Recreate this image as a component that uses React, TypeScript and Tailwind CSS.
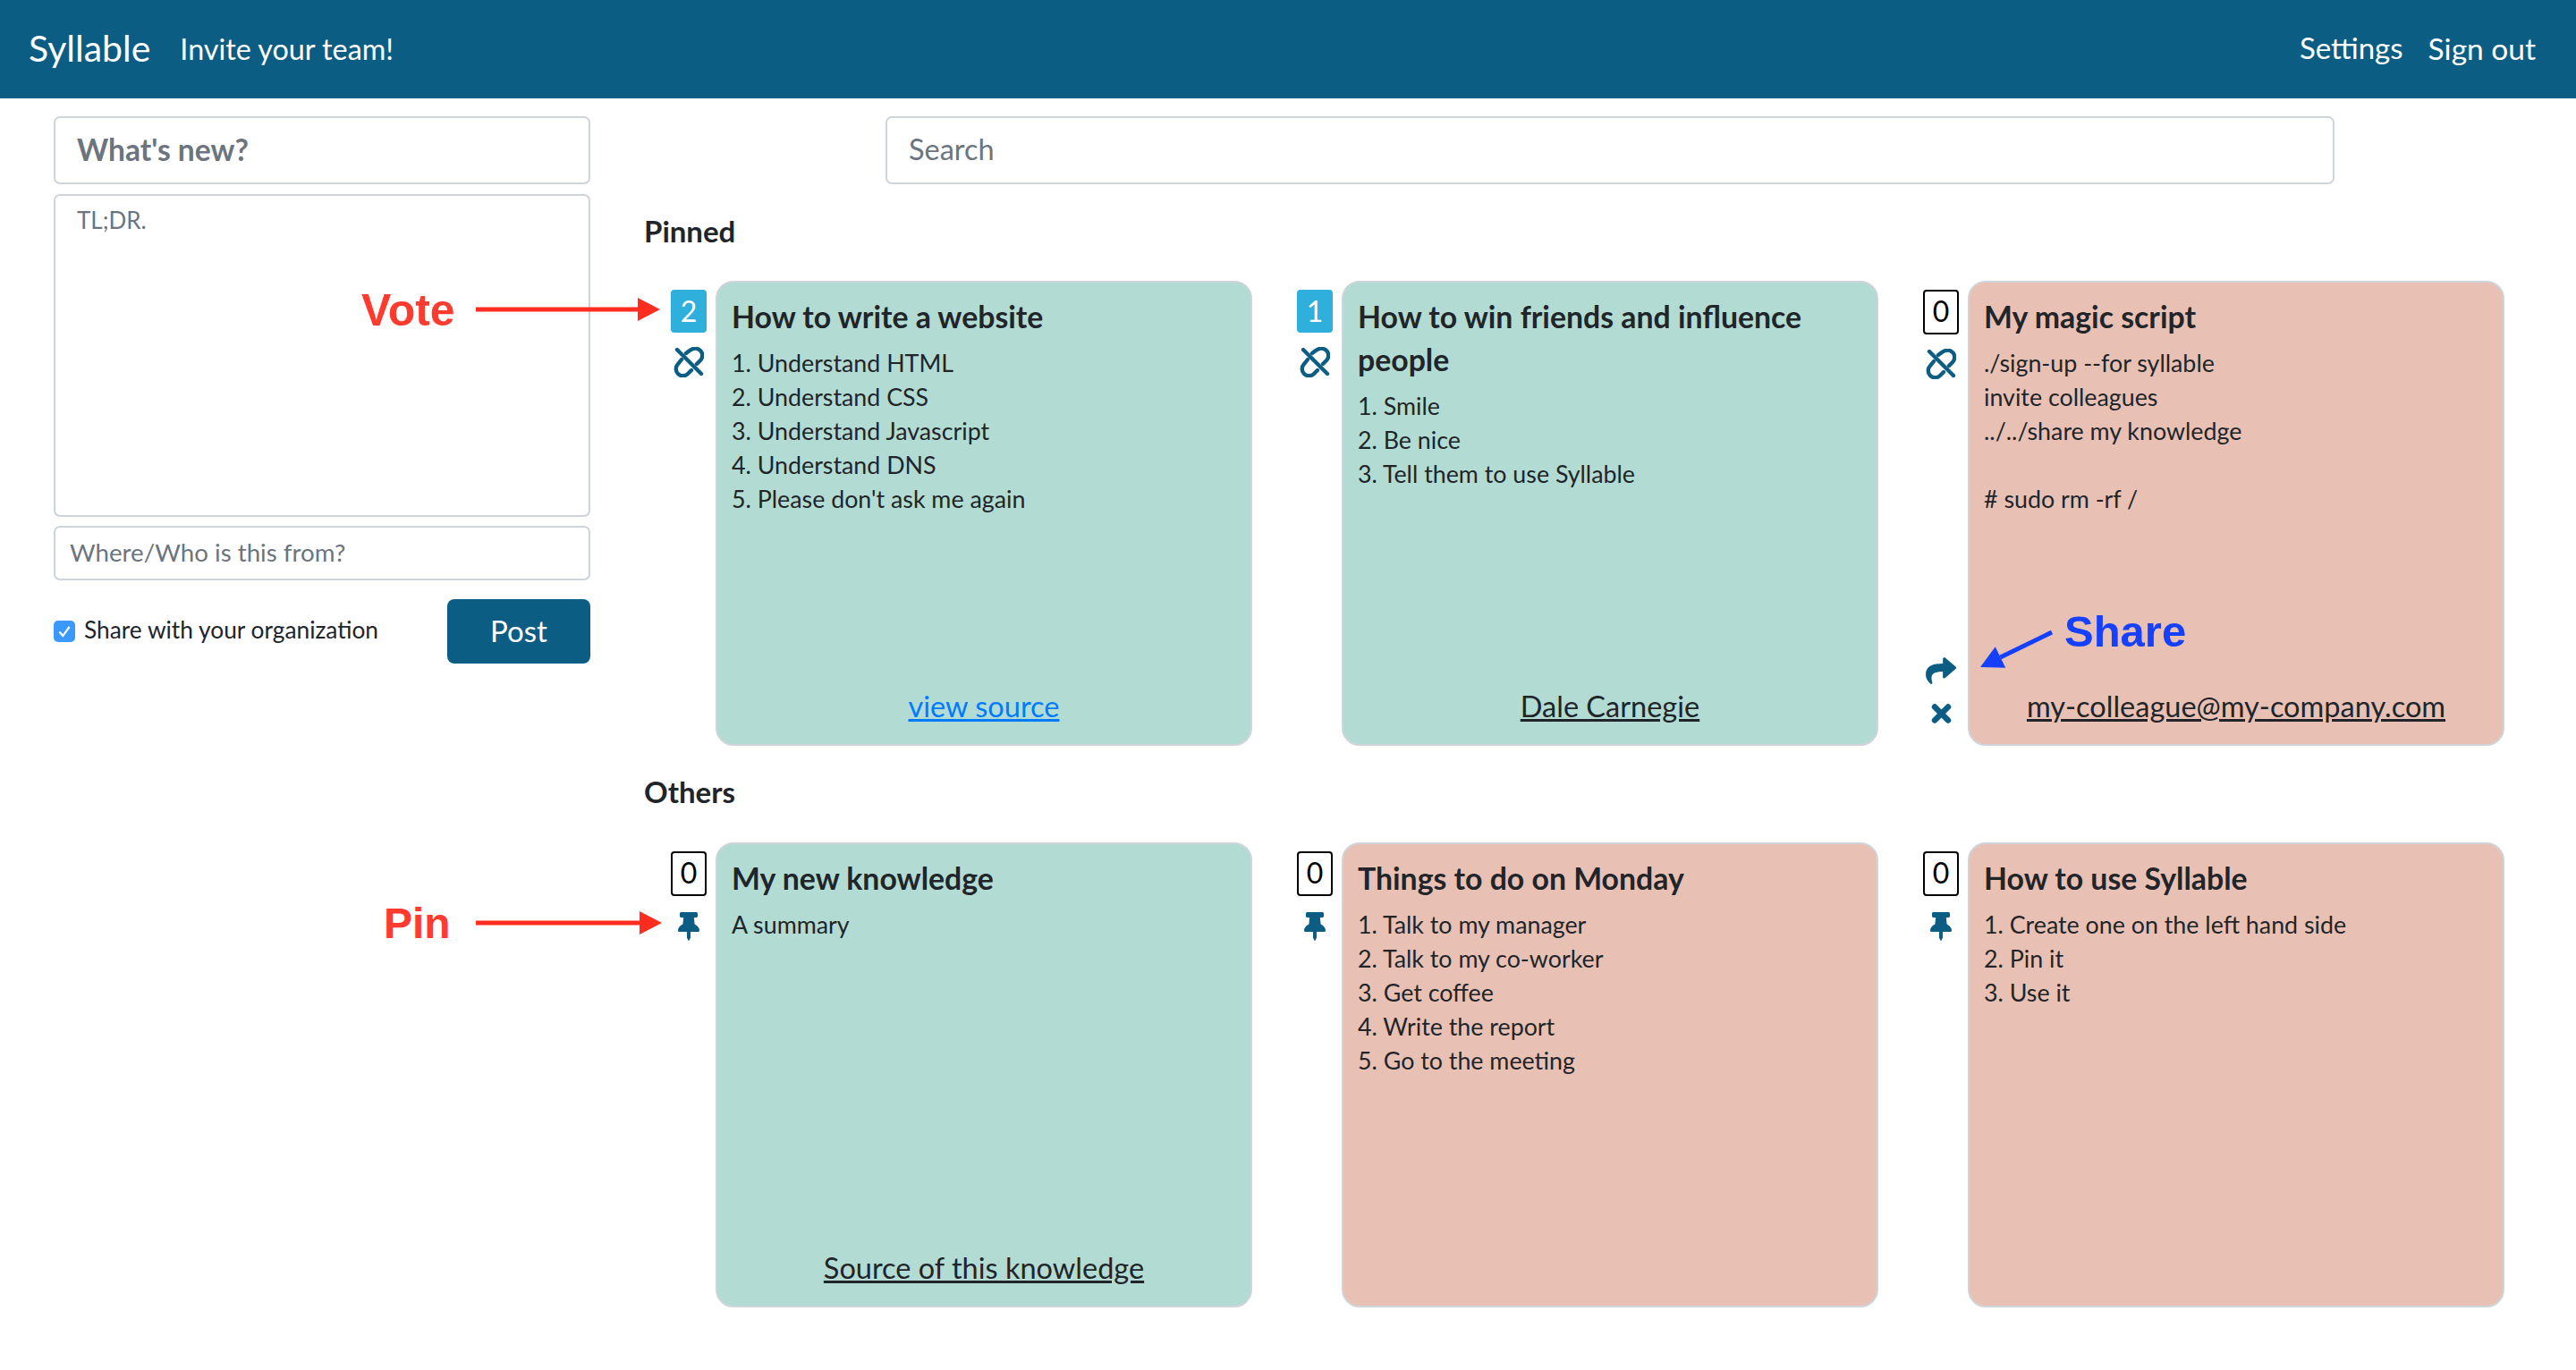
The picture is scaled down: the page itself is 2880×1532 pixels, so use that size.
import React from "react";
import { FaThumbtack, FaShare } from "react-icons/fa";

const Unlink = () => (
  <svg viewBox="0 0 34 34" className="w-[34px] h-[34px]" fill="none" stroke="#0c5d84" strokeWidth="4.4" strokeLinecap="round">
    <path d="M4 3 L31 30" />
    <path d="M14 7 L18 4 C22 1 27 1 30 4 C33 7 33 12 30 15 L26 19" />
    <path d="M9 14 L5 19 C2 22 2 27 5 30 C8 33 13 33 16 30 L20 26" />
  </svg>
);

const Cross = () => (
  <svg viewBox="0 0 23 22" className="w-[23px] h-[22px]" fill="none" stroke="#0c5d84" strokeWidth="6.5" strokeLinecap="round">
    <path d="M4 3.5 L19 18.5" />
    <path d="M19 3.5 L4 18.5" />
  </svg>
);

type CardProps = {
  votes: number;
  title: string;
  lines: string[];
  tone: "teal" | "salmon";
  link?: string;
  linkBlue?: boolean;
  pinned?: boolean;
  own?: boolean;
};

const Card = ({ votes, title, lines, tone, link, linkBlue, pinned, own }: CardProps) => (
  <div className="flex h-[520px] w-[650px]">
    <div className="w-[40px] flex flex-col items-center pt-[10px] pb-[25px]">
      <div
        className={
          votes > 0
            ? "w-[40px] h-[48px] rounded-[4px] bg-[#2fafdc] text-white flex items-center justify-center text-[32px]"
            : "w-[40px] h-[50px] rounded-[4px] border-2 border-black text-black flex items-center justify-center text-[32px] pb-[3px]"
        }
      >
        {votes}
      </div>
      <div className="mt-[16px] text-[#0c5d84]">
        {pinned ? <Unlink /> : <FaThumbtack className="w-[32px] h-[32px] mt-[2px]" />}
      </div>
      {own && (
        <div className="mt-auto flex flex-col items-center text-[#0c5d84]">
          <FaShare className="w-[34px] h-[34px]" />
          <div className="mt-[20px]"><Cross /></div>
        </div>
      )}
    </div>
    <div
      className={
        "ml-[10px] w-[600px] h-full rounded-[20px] border-2 border-[#ced4da] px-[16px] pt-[14px] pb-[22px] flex flex-col text-[#212529] " +
        (tone === "teal" ? "bg-[#b2dcd3]" : "bg-[#e9c1b4]")
      }
    >
      <div className="text-[33.8px] leading-[48px] font-bold">{title}</div>
      <div className="text-[26.8px] leading-[38px] mt-[9px] whitespace-pre-wrap">
        {lines.map((l, i) => (
          <div key={i} className="h-[38px]">{l}</div>
        ))}
      </div>
      {link && (
        <div className={"mt-auto text-center text-[32.5px] leading-[40px] underline " + (linkBlue ? "text-[#007bff]" : "text-[#212529]")}>
          {link}
        </div>
      )}
    </div>
  </div>
);

const Arrow = ({ x2, y2, x1, y1, color }: { x1: number; y1: number; x2: number; y2: number; color: string }) => {
  const a = Math.atan2(y2 - y1, x2 - x1);
  const l = 25;
  const w = 13;
  const bx = x2 - l * Math.cos(a);
  const by = y2 - l * Math.sin(a);
  const px = -Math.sin(a) * w;
  const py = Math.cos(a) * w;
  return (
    <svg className="absolute left-0 top-0 pointer-events-none" width="2880" height="1532">
      <line x1={x1} y1={y1} x2={bx} y2={by} stroke={color} strokeWidth="5" />
      <polygon points={`${x2},${y2} ${bx + px},${by + py} ${bx - px},${by - py}`} fill={color} />
    </svg>
  );
};

const inputCls = "w-full border-2 border-[#ced4da] rounded-[7px] bg-white text-[#6c757d]";

export default function App() {
  return (
    <div className="relative min-h-[1532px] bg-white font-['Lato','Liberation_Sans',sans-serif]">
      <header className="h-[110px] bg-[#0c5d84] text-white flex items-center pl-[32px] pr-[45px]">
        <span className="text-[41px] pb-[3px]">Syllable</span>
        <span className="text-[32.3px] ml-[33px]">Invite your team!</span>
        <span className="text-[33px] ml-auto pb-[2px]">Settings</span>
        <span className="text-[33.5px] ml-[28px] pb-[2px]">Sign out</span>
      </header>

      <div className="flex pl-[60px] pt-[20px]">
        <aside className="w-[600px] shrink-0">
          <div className={inputCls + " h-[76px] flex items-center px-[24px] pb-[2px] text-[33.6px] font-bold"}>What's new?</div>
          <div className={inputCls + " h-[361px] mt-[11px] px-[24px] py-[8px] text-[26px] leading-[38px]"}>TL;DR.</div>
          <div className={inputCls + " h-[61px] mt-[10px] flex items-center px-[16px] pb-[2px] text-[27.7px]"}>Where/Who is this from?</div>
          <div className="flex items-center justify-between mt-[21px]">
            <label className="flex items-center text-[26.3px] text-[#212529]">
              <span className="w-[24px] h-[24px] rounded-[5px] bg-[#3b99fc] text-white flex items-center justify-center">
                <svg viewBox="0 0 16 16" className="w-[18px] h-[18px]" fill="none" stroke="white" strokeWidth="2"><path d="M3 8.5 L6.5 12.5 L13 3.5" /></svg>
              </span>
              <span className="ml-[10px] pb-[2px]">Share with your organization</span>
            </label>
            <div className="w-[160px] h-[72px] rounded-[8px] bg-[#0c5d84] text-white text-[33px] flex items-center justify-center">Post</div>
          </div>
        </aside>

        <main className="ml-[60px] flex-1">
          <div className="ml-[270px] w-[1620px] h-[76px] border-2 border-[#ced4da] rounded-[7px] flex items-center px-[24px] pb-[2px] text-[32.5px] text-[#6c757d]">Search</div>

          <h2 className="text-[33px] leading-[48px] font-bold text-[#212529] mt-[28px]">Pinned</h2>
          <div className="flex gap-[50px] pl-[30px] mt-[32px]">
            <Card votes={2} pinned tone="teal" title="How to write a website" link="view source" linkBlue
              lines={["1. Understand HTML", "2. Understand CSS", "3. Understand Javascript", "4. Understand DNS", "5. Please don't ask me again"]} />
            <Card votes={1} pinned tone="teal" title="How to win friends and influence people" link="Dale Carnegie"
              lines={["1. Smile", "2. Be nice", "3. Tell them to use Syllable"]} />
            <Card votes={0} pinned own tone="salmon" title="My magic script" link="my-colleague@my-company.com"
              lines={["./sign-up --for syllable", "invite colleagues", "../../share my knowledge", "", "# sudo rm -rf /"]} />
          </div>

          <h2 className="text-[33px] leading-[48px] font-bold text-[#212529] mt-[27px]">Others</h2>
          <div className="flex gap-[50px] pl-[30px] mt-[33px]">
            <Card votes={0} tone="teal" title="My new knowledge" link="Source of this knowledge" lines={["A summary"]} />
            <Card votes={0} tone="salmon" title="Things to do on Monday"
              lines={["1. Talk to my manager", "2. Talk to my co-worker", "3. Get coffee", "4. Write the report", "5. Go to the meeting"]} />
            <Card votes={0} tone="salmon" title="How to use Syllable"
              lines={["1. Create one on the left hand side", "2. Pin it", "3. Use it"]} />
          </div>
        </main>
      </div>

      <span className="absolute left-[404px] top-[318px] text-[#ff3b30] font-bold text-[50px] leading-[58px] font-['Liberation_Sans',sans-serif]">Vote</span>
      <Arrow x1={532} y1={346} x2={738} y2={346} color="#ff2d20" />
      <span className="absolute left-[429px] top-[1004px] text-[#ff3b30] font-bold text-[48px] leading-[58px] font-['Liberation_Sans',sans-serif]">Pin</span>
      <Arrow x1={532} y1={1032} x2={740} y2={1032} color="#ff2d20" />
      <span className="absolute left-[2308px] top-[677px] text-[#1540ff] font-bold text-[49px] leading-[58px] font-['Liberation_Sans',sans-serif]">Share</span>
      <Arrow x1={2294} y1={707} x2={2214} y2={746} color="#1540ff" />
    </div>
  );
}
